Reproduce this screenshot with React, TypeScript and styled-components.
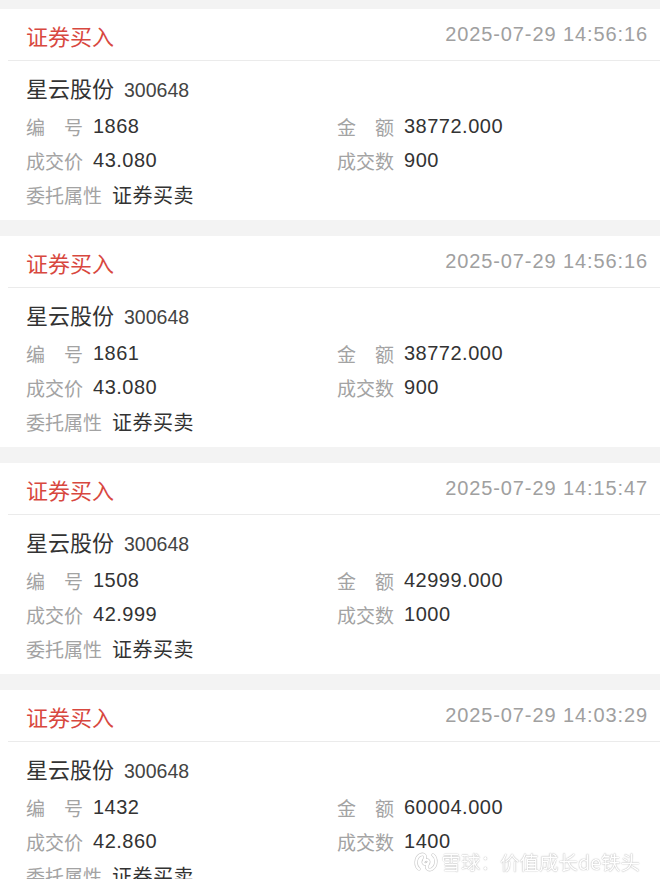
import React from 'react';
import styled, { createGlobalStyle } from 'styled-components';

type Trade = {
  time: string;
  no: string;
  amount: string;
  price: string;
  qty: string;
};

const trades: Trade[] = [
  { time: '2025-07-29 14:56:16', no: '1868', amount: '38772.000', price: '43.080', qty: '900' },
  { time: '2025-07-29 14:56:16', no: '1861', amount: '38772.000', price: '43.080', qty: '900' },
  { time: '2025-07-29 14:15:47', no: '1508', amount: '42999.000', price: '42.999', qty: '1000' },
  { time: '2025-07-29 14:03:29', no: '1432', amount: '60004.000', price: '42.860', qty: '1400' },
];

const GlobalStyle = createGlobalStyle`
  html, body {
    margin: 0;
    padding: 0;
    background: #f3f3f3;
    overflow: hidden;
  }
  body {
    font-family: "Liberation Sans", "Noto Sans CJK SC", sans-serif;
  }
`;

const App: React.FC = () => {
  return (
    <>
      <GlobalStyle />
      <Page>
        {trades.map((t, i) => (
          <Card key={i}>
            <Header>
              <Title>证券买入</Title>
              <Time>{t.time}</Time>
            </Header>
            <Body>
              <NameRow>
                <StockName>星云股份</StockName>
                <StockCode>300648</StockCode>
              </NameRow>
              <Fields>
                <Field>
                  <Label $w={57}>编号</Label>
                  <Value>{t.no}</Value>
                </Field>
                <Field>
                  <Label $w={57}>金额</Label>
                  <Value>{t.amount}</Value>
                </Field>
                <Field>
                  <Label>成交价</Label>
                  <Value>{t.price}</Value>
                </Field>
                <Field>
                  <Label>成交数</Label>
                  <Value>{t.qty}</Value>
                </Field>
                <Field>
                  <Label>委托属性</Label>
                  <Value>证券买卖</Value>
                </Field>
              </Fields>
            </Body>
          </Card>
        ))}
      </Page>
      <Watermark>
        <svg width="26" height="22" viewBox="0 0 26 22">
          <g fill="none" stroke="rgba(0,0,0,0.22)" strokeWidth="3.4" strokeLinecap="round">
            <path d="M6 18 C2 15 2 7 7 4 C11 2 14 5 11 9 C9 12 12 15 15 12" />
            <path d="M20 4 C24 7 24 15 19 18 C15 20 12 17 15 13 C17 10 14 7 11 10" />
          </g>
          <g fill="none" stroke="#fff" strokeWidth="2.2" strokeLinecap="round">
            <path d="M6 18 C2 15 2 7 7 4 C11 2 14 5 11 9 C9 12 12 15 15 12" />
            <path d="M20 4 C24 7 24 15 19 18 C15 20 12 17 15 13 C17 10 14 7 11 10" />
          </g>
        </svg>
        <span>雪球：价值成长de铁头</span>
      </Watermark>
    </>
  );
};

const Page = styled.div`
  display: flex;
  flex-direction: column;
  gap: 16px;
  padding-top: 9px;
`;

const Card = styled.div`
  background: #fff;
`;

const Header = styled.div`
  display: flex;
  align-items: center;
  justify-content: space-between;
  height: 51px;
  margin-left: 8px;
  padding: 0 12px 0 18px;
  border-bottom: 1px solid #ebebeb;
`;

const Title = styled.div`
  font-size: 22px;
  line-height: 1;
  color: #d8483f;
  font-family: "Noto Sans CJK SC", sans-serif;
`;

const Time = styled.div`
  font-size: 20px;
  letter-spacing: 0.9px;
  color: #a0a0a0;
`;

const Body = styled.div`
  padding: 9px 0 9px 26px;
`;

const NameRow = styled.div`
  display: flex;
  align-items: baseline;
  height: 34px;
  line-height: 34px;
  gap: 10px;
`;

const StockName = styled.span`
  font-family: "Noto Sans CJK SC", sans-serif;
  font-size: 22px;
  color: #333;
`;

const StockCode = styled.span`
  font-size: 19.5px;
  color: #444;
`;

const Fields = styled.div`
  display: grid;
  grid-template-columns: 311px 1fr;
  grid-auto-rows: 34px;
  margin-top: 5px;
`;

const Field = styled.div`
  display: flex;
  align-items: center;
  gap: 10px;
`;

const Label = styled.span<{ $w?: number }>`
  display: inline-block;
  font-family: "Noto Sans CJK SC", sans-serif;
  font-size: 19px;
  color: #a3a3a3;
  white-space: nowrap;
  ${(p) => (p.$w ? `width: ${p.$w}px; text-align: justify; text-align-last: justify;` : '')}
`;

const Value = styled.span`
  font-family: "Liberation Sans", "Noto Sans CJK SC", sans-serif;
  font-size: 20px;
  letter-spacing: 0.5px;
  color: #333;
`;

const Watermark = styled.div`
  position: fixed;
  right: 20px;
  top: 847px;
  display: flex;
  align-items: center;
  gap: 3px;
  font-family: "Noto Sans CJK SC", sans-serif;
  font-size: 19.5px;
  color: #fff;
  text-shadow: 0 0 1px rgba(0, 0, 0, 0.35), 0 0 2px rgba(0, 0, 0, 0.15);
`;

export default App;
